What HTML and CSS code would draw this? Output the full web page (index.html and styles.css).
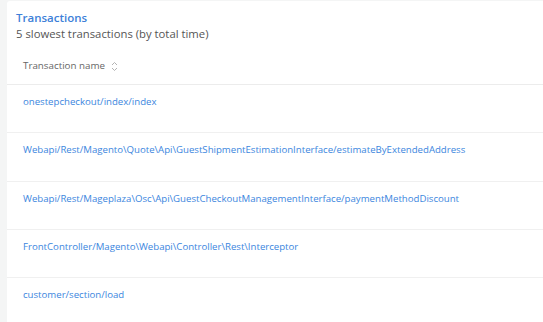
FILE: index.html
```html
<!DOCTYPE html>
<html>
<head>
<meta charset="utf-8">
<link rel="stylesheet" href="styles.css">
</head>
<body>
<div class="card">
  <div class="card-head">
    <div class="title">Transactions</div>
    <div class="subtitle">5 slowest transactions (by total time)</div>
  </div>
  <div class="table">
    <div class="th">
      <span>Transaction name</span>
      <svg class="sort" width="7" height="11" viewBox="0 0 7 11"><path d="M1 4 L3.5 1.5 L6 4 M1 7 L3.5 9.5 L6 7" fill="none" stroke="#aaa" stroke-width="0.9"/></svg>
    </div>
    <div class="row"><a>onestepcheckout/index/index</a></div>
    <div class="row"><a>Webapi/Rest/Magento\Quote\Api\GuestShipmentEstimationInterface/estimateByExtendedAddress</a></div>
    <div class="row"><a>Webapi/Rest/Mageplaza\Osc\Api\GuestCheckoutManagementInterface/paymentMethodDiscount</a></div>
    <div class="row"><a>FrontController/Magento\Webapi\Controller\Rest\Interceptor</a></div>
    <div class="row"><a>customer/section/load</a></div>
  </div>
</div>
</body>
</html>
```
FILE: styles.css
```css
html, body { margin: 0; padding: 0; }
body {
  background: #f4f5f5;
  font-family: "Open Sans", "Liberation Sans", sans-serif;
  padding: 1px 0 0 7px;
  overflow: hidden;
  width: 543px;
  height: 322px;
  box-sizing: border-box;
}
.card {
  background: #fff;
  border-radius: 3px 0 0 0;
  min-height: 330px;
}
.card-head { padding: 9px 0 0 9px; }
.title {
  color: #3d7fd8;
  font-size: 11.5px;
  font-weight: 600;
  line-height: 16px;
}
.subtitle {
  color: #555;
  font-size: 11.3px;
  line-height: 16px;
}
.th {
  display: flex;
  align-items: center;
  gap: 6px;
  height: 43px;
  padding: 5px 0 0 16px;
  box-sizing: border-box;
  border-bottom: 1px solid #ececec;
  color: #666;
  font-size: 9.8px;
}
.sort { margin-top: 1px; }
.row {
  height: 48.3px;
  box-sizing: border-box;
  padding: 10px 0 0 16px;
  border-bottom: 1px solid #f0f0f0;
  font-size: 9.65px;
  line-height: 13px;
}
.row a { color: #3b86de; }
```
